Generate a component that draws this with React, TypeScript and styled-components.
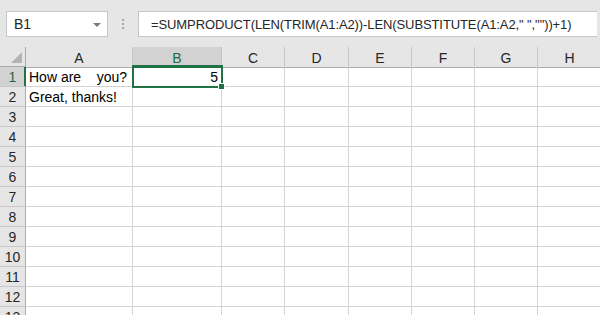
import React from 'react';
import styled, { createGlobalStyle } from 'styled-components';

const GlobalStyle = createGlobalStyle`
	html, body {
		margin: 0;
		padding: 0;
		background: #ffffff;
	}
	body {
		font-family: "Liberation Sans", Arial, sans-serif;
		width: 600px;
		height: 315px;
		overflow: hidden;
	}
`;

const COLUMNS = [
	{ key: 'A', width: 107 },
	{ key: 'B', width: 89 },
	{ key: 'C', width: 63 },
	{ key: 'D', width: 64 },
	{ key: 'E', width: 63 },
	{ key: 'F', width: 63 },
	{ key: 'G', width: 63 },
	{ key: 'H', width: 64 },
];

const ROWS = 13;

const CELLS: Record<string, { text: string; align?: 'left' | 'right' }> = {
	A1: { text: 'How are    you?' },
	A2: { text: 'Great, thanks!' },
	B1: { text: '5', align: 'right' },
};

const SELECTED = { col: 'B', row: 1 };

const Sheet = styled.div`
	width: 600px;
	height: 315px;
	display: flex;
	flex-direction: column;
	background: #ffffff;
	overflow: hidden;
`;

const FormulaRow = styled.div`
	height: 47px;
	flex: none;
	background: #e6e6e6;
	display: flex;
	align-items: flex-start;
	padding: 11px 3px 0 6px;
	box-sizing: border-box;
`;

const NameBox = styled.div`
	flex: none;
	width: 102px;
	height: 26px;
	box-sizing: border-box;
	background: #ffffff;
	border: 1px solid #c6c6c6;
	display: flex;
	align-items: center;
	justify-content: space-between;
	padding: 0 6px 0 7px;
	font-size: 14px;
	color: #262626;
`;

const Caret = styled.span`
	width: 0;
	height: 0;
	border-left: 4px solid transparent;
	border-right: 4px solid transparent;
	border-top: 4px solid #7a7a7a;
	margin-top: 1px;
`;

const Grip = styled.div`
	flex: none;
	width: 30px;
	height: 26px;
	display: flex;
	flex-direction: column;
	align-items: center;
	justify-content: center;
	gap: 2px;
`;

const GripDot = styled.span`
	width: 2px;
	height: 2px;
	background: #a6a6a6;
`;

const FormulaInput = styled.div`
	flex: 1;
	min-width: 0;
	overflow: hidden;
	height: 26px;
	box-sizing: border-box;
	background: #ffffff;
	border: 1px solid #c6c6c6;
	border-right: none;
	display: flex;
	align-items: center;
	padding-left: 12px;
	font-size: 13px;
	letter-spacing: -0.1px;
	color: #262626;
	white-space: pre;
`;

const Grid = styled.div<{ $template: string }>`
	display: grid;
	grid-template-columns: ${(p) => p.$template};
	grid-auto-rows: 20px;
	flex: none;
`;

const Corner = styled.div`
	height: 19px;
	background: #e6e6e6;
	border-right: 1px solid #ababab;
	border-bottom: 1px solid #ababab;
	position: relative;
`;

const CornerTriangle = styled.span`
	position: absolute;
	right: 3px;
	bottom: 3px;
	width: 0;
	height: 0;
	border-left: 11px solid transparent;
	border-bottom: 11px solid #b4b4b4;
`;

const ColHeader = styled.div<{ $active?: boolean }>`
	height: 19px;
	box-sizing: content-box;
	background: ${(p) => (p.$active ? '#d2d2d2' : '#e6e6e6')};
	border-right: 1px solid ${(p) => (p.$active ? '#c2c2c2' : '#c8c8c8')};
	border-bottom: 1px solid ${(p) => (p.$active ? '#217346' : '#ababab')};
	${(p) => p.$active && 'box-shadow: inset 0 -1px 0 #217346;'}
	display: flex;
	align-items: center;
	justify-content: center;
	font-size: 14px;
	color: ${(p) => (p.$active ? '#1e6b41' : '#262626')};
	padding-top: 1px;
`;

const RowHeader = styled.div<{ $active?: boolean }>`
	background: ${(p) => (p.$active ? '#d2d2d2' : '#e6e6e6')};
	border-right: 1px solid ${(p) => (p.$active ? '#217346' : '#ababab')};
	${(p) => p.$active && 'box-shadow: inset -1px 0 0 #217346;'}
	border-bottom: 1px solid #c8c8c8;
	box-sizing: border-box;
	display: flex;
	align-items: center;
	justify-content: center;
	font-size: 14px;
	color: ${(p) => (p.$active ? '#1e6b41' : '#262626')};
`;

const Cell = styled.div<{ $align?: 'left' | 'right' }>`
	position: relative;
	box-sizing: border-box;
	border-right: 1px solid #d4d4d4;
	border-bottom: 1px solid #d4d4d4;
	display: flex;
	align-items: center;
	justify-content: ${(p) => (p.$align === 'right' ? 'flex-end' : 'flex-start')};
	padding: 1px 3px 0 3px;
	font-size: 14px;
	color: #000000;
	white-space: pre;
	overflow: visible;
	z-index: ${(p) => (p.$align === 'right' ? 1 : 0)};
`;

const Selection = styled.span`
	position: absolute;
	top: -2px;
	left: -1px;
	right: -2px;
	bottom: -2px;
	border: 2px solid #217346;
	pointer-events: none;
	z-index: 2;
`;

const FillHandle = styled.span`
	position: absolute;
	right: -4px;
	bottom: -4px;
	width: 5px;
	height: 5px;
	background: #217346;
	border: 1px solid #ffffff;
`;

const App = () => {
	const template = ['26px', ...COLUMNS.map((c) => `${c.width}px`)].join(' ');
	const rows = Array.from({ length: ROWS }, (_, i) => i + 1);

	return (
		<>
			<GlobalStyle />
			<Sheet>
				<FormulaRow>
					<NameBox>
						<span>B1</span>
						<Caret />
					</NameBox>
					<Grip>
						<GripDot />
						<GripDot />
						<GripDot />
					</Grip>
					<FormulaInput>
						{'=SUMPRODUCT(LEN(TRIM(A1:A2))-LEN(SUBSTITUTE(A1:A2," ",""))+1)'}
					</FormulaInput>
				</FormulaRow>
				<Grid $template={template}>
					<Corner>
						<CornerTriangle />
					</Corner>
					{COLUMNS.map((c) => (
						<ColHeader key={c.key} $active={c.key === SELECTED.col}>
							{c.key}
						</ColHeader>
					))}
					{rows.map((r) => (
						<React.Fragment key={r}>
							<RowHeader $active={r === SELECTED.row}>{r}</RowHeader>
							{COLUMNS.map((c) => {
								const id = `${c.key}${r}`;
								const cell = CELLS[id];
								const selected = c.key === SELECTED.col && r === SELECTED.row;
								return (
									<Cell key={id} $align={cell?.align}>
										{cell?.text}
										{selected && (
											<Selection>
												<FillHandle />
											</Selection>
										)}
									</Cell>
								);
							})}
						</React.Fragment>
					))}
				</Grid>
			</Sheet>
		</>
	);
};

export default App;
